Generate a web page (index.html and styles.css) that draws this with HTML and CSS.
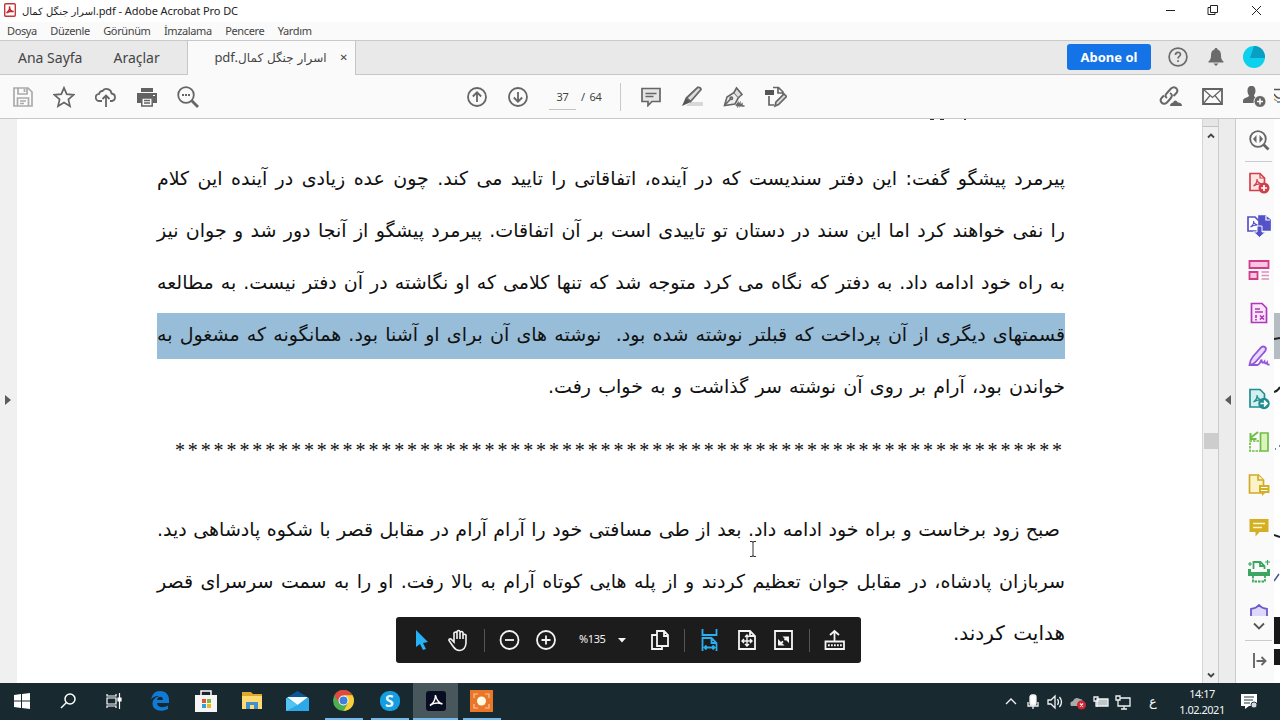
FILE: index.html
```html
<!DOCTYPE html>
<html lang="tr">
<head>
  <meta charset="UTF-8">
  <meta name="viewport" content="width=device-width, initial-scale=1.0">
  <title>اسرار جنگل کمال.pdf - Adobe Acrobat Pro DC</title>
  <link rel="stylesheet" href="styles.css">
</head>
<body>
  <div class="app">
    <header class="titlebar">
      <svg class="app-icon" width="12" height="14" viewBox="0 0 12 14"><rect x=".7" y=".7" width="10.6" height="12.6" rx="1" fill="#fff" stroke="#c4383b" stroke-width="1.4"/><path d="M2.5 10C5 8 6 5.500 5.500 3.500C5.500 6 7 8.500 9.700 8.500C7 8 4.500 8.500 2.500 10Z" fill="none" stroke="#c4262b" stroke-width="1.500"/></svg>
      <div class="window-title" dir="ltr"><span class="fa" dir="rtl">اسرار جنگل کمال</span>.pdf - Adobe Acrobat Pro DC</div>
      <div class="window-buttons">
        <svg width="100" height="14" viewBox="0 0 100 14" fill="none" stroke="#222"><path d="M1 7.500H10M46 4.500h-3v7h7v-2M45.500 2.500h7v7h-7zM87 3l9 9M96 3l-9 9"/></svg>
      </div>
    </header>

    <nav class="menubar">
      <span>Dosya</span><span>Düzenle</span><span>Görünüm</span><span>İmzalama</span><span>Pencere</span><span>Yardım</span>
    </nav>

    <div class="tabbar">
      <div class="home-tabs"><span>Ana Sayfa</span><span>Araçlar</span></div>
      <div class="tab"><span class="tab-name" dir="ltr">pdf.<span class="fa" dir="rtl">اسرار جنگل کمال</span></span><span class="tab-close">✕</span></div>
      <div class="account">
        <button class="subscribe">Abone ol</button>
        <svg width="20" height="20" viewBox="0 0 20 20" fill="none" stroke="#6b6b6b" stroke-width="1.700"><circle cx="10" cy="10" r="8.900"/><path d="M7.500 8c0-3.500 5-3.500 5-.5c0 2-2.500 1.700-2.500 4M10 13.200v1.800"/></svg>
        <svg width="16" height="20" viewBox="0 0 16 20" fill="#6b6b6b"><path d="M8 1c1 0 1.500.7 1.500 1.600C12 3.500 13 5.500 13 8c0 4 1 5 2.500 6.500v1H.5v-1C2 13 3 12 3 8c0-2.500 1-4.500 3.500-5.400C6.500 1.700 7 1 8 1zM5.500 16.500h5L8 19z"/></svg>
        <svg width="22" height="22" viewBox="0 0 22 22"><circle cx="11" cy="11" r="11" fill="#0bd0ee"/><path d="M11 0v0a11 11 0 0 1 11 12L7 12z" fill="#0a9fc2"/></svg>
      </div>
    </div>

    <div class="toolbar">
      <div class="tools tools-left">
        <svg width="20" height="20" viewBox="0 0 20 20" fill="none" stroke="#aaa" stroke-width="1.700"><path d="M1 1h14l4 4v14H1zM5 1v6h9V1M4.500 19v-8h11v8M7 14h6M7 16.500h4M11.500 2v3"/></svg>
        <svg width="22" height="22" viewBox="0 0 22 22" fill="none" stroke="#666" stroke-width="1.700"><path d="M11 1.800l2.700 6.400 7 .6-5.300 4.600 1.600 6.800-6-3.600-6 3.600 1.600-6.800L1.300 8.800l7-.6z"/></svg>
        <svg width="22" height="20" viewBox="0 0 22 20" fill="none" stroke="#666" stroke-width="1.800"><path d="M7 14H4.500a3.600 3.600 0 0 1-.3-7.200A3 3 0 0 1 7.500 4a5 5 0 0 1 9 2.500 3.800 3.800 0 0 1 .5 7.500h-2M11 20V8.500M7.500 12L11 8.500 14.500 12"/></svg>
        <svg width="20" height="20" viewBox="0 0 20 20"><path d="M4 1h12v4H4zM0 6h20v10h-4v-5H4v5H0z" fill="#626262"/><path d="M4.800 11h10.400v8H4.800zM7 13.500h6M7 16h6" fill="#fff" stroke="#626262" stroke-width="1.500"/><path d="M16 8.500h2" stroke="#fff"/></svg>
        <svg width="22" height="22" viewBox="0 0 22 22" fill="none" stroke="#666" stroke-width="1.800"><circle cx="9" cy="9" r="7.800"/><path d="M14.500 14.500l6.500 6.500" stroke-width="2.800"/><path d="M5 9h8" stroke-width="2" stroke-dasharray="2 1"/></svg>
      </div>
      <div class="tools tools-page">
        <svg width="20" height="20" viewBox="0 0 20 20" fill="none" stroke="#666" stroke-width="1.800"><circle cx="10" cy="10" r="9"/><path d="M10 15V5.500M5.800 9.500L10 5.300l4.200 4.200"/></svg>
        <svg width="20" height="20" viewBox="0 0 20 20" fill="none" stroke="#666" stroke-width="1.800"><circle cx="10" cy="10" r="9"/><path d="M10 5v9.500M5.800 10.500L10 14.700l4.200-4.200"/></svg>
        <span class="page-number">37</span><span class="page-total">/&nbsp; 64</span>
      </div>
      <div class="tools tools-comment">
        <svg width="20" height="20" viewBox="0 0 20 20" fill="#e4e4e4" stroke="#666" stroke-width="1.700"><path d="M1 1.500h18v13h-8L7 18.500v-4H1z"/><path d="M4.500 6.500h11M4.500 9.500h8" stroke-width="1.300"/></svg>
        <svg width="22" height="21" viewBox="0 0 22 21"><path d="M9 16h13v4H5z" fill="#d8d8d8"/><path d="M5.500 12L16.500 1.500q3-.5 3.500 2L9.500 15.500z" fill="#ddd" stroke="#666" stroke-width="1.800"/><path d="M4.500 12l5 4-3 1.500L1 20z" fill="#555"/></svg>
        <svg width="22" height="22" viewBox="0 0 22 22" fill="#eee" stroke="#666" stroke-width="1.600"><path d="M1.500 19.500L4 11l7-4.500 4.500 5L12 18z"/><path d="M1.500 19.500l6-6.500" fill="none"/><path d="M11 6.500L13.500 2l5.500 6.500-3.500 3" fill="#ddd"/><circle cx="8.300" cy="12.300" r="1.200"/><path d="M13 20l2-3v3l2-3v3l2-2v2h2.500" fill="none" stroke-width="1.400"/></svg>
        <svg width="22" height="22" viewBox="0 0 22 22" fill="none" stroke="#666" stroke-width="1.700"><path d="M8 1.500h5.500L18 6v3M13 2v5h5M4 10v9h5"/><path d="M0 4h9v5H0z" fill="#555" stroke="none"/><path d="M10 20l1-4 8-8 2.500 2.500-8 8z" fill="#ddd"/></svg>
      </div>
      <div class="tools tools-share">
        <svg width="23" height="21" viewBox="0 0 23 21" fill="none" stroke="#666" stroke-width="2"><path d="M8 12q-3-2 0-5l4-4.500q3-2.500 5.500 0 2 2.500-.5 5L14.500 10M11 7q3.500 2 .5 5.500L8 16.500Q5 19 2.500 16.500q-2-2.500.5-5l2-2"/><path d="M11 20q0-3 3-3.500 2-4 5 0 4 0 4 3.500z" fill="#666" stroke="none"/></svg>
        <svg width="21" height="17" viewBox="0 0 21 17" fill="none" stroke="#626262"><path d="M1 1h19v15H1z" stroke-width="1.800"/><path d="M1.500 1.500l9 8 9-8M1.500 15.500L8 7.500M19.500 15.500L13 7.500" stroke-width="1.200"/></svg>
        <svg width="23" height="21" viewBox="0 0 23 21"><path d="M8.500 0c3 0 4 2 4 5 0 2-1 3-1.500 4.500 0 2 4 1.500 5 4.500l-3 3H0v-2c0-4 6-3 6-5.500C5 8 4.500 7 4.500 5c0-3 1-5 4-5z" fill="#666"/><circle cx="17" cy="15.500" r="6" fill="#666" stroke="#fafafa"/><path d="M17 12.500v6M14 15.500h6" stroke="#fff" stroke-width="1.500"/></svg>
      </div>
      <svg class="edge-icon" width="6" height="18" viewBox="0 0 6 18" fill="none"><path d="M0 1.500h6M0 6q3 5 6 4" stroke="#555" stroke-width="1.500"/><path d="M0 11l3 2" stroke="#e19436" stroke-width="1.500"/><path d="M3 14h3" stroke="#397cc3" stroke-width="1.500"/></svg>
    </div>

    <main class="workspace">
      <div class="left-rail"><svg width="6" height="10" viewBox="0 0 6 10"><path d="M0 0l6 5-6 5z" fill="#5c5c5c"/></svg></div>
      <div class="document">
        <div class="cut-line"><i></i><i></i><i></i></div>
        <div class="page" dir="rtl" lang="fa">
          <p class="line">پیرمرد پیشگو گفت: این دفتر سندیست که در آینده، اتفاقاتی را تایید می کند. چون عده زیادی در آینده این کلام</p>
          <p class="line">را نفی خواهند کرد اما این سند در دستان تو تاییدی است بر آن اتفاقات. پیرمرد پیشگو از آنجا دور شد و جوان نیز</p>
          <p class="line">به راه خود ادامه داد. به دفتر که نگاه می کرد متوجه شد که تنها کلامی که او نگاشته در آن دفتر نیست. به مطالعه</p>
          <p class="line selected">قسمتهای دیگری از آن پرداخت که قبلتر نوشته شده بود.&nbsp; نوشته های آن برای او آشنا بود. همانگونه که مشغول به</p>
          <p class="line w5">خواندن بود، آرام بر روی آن نوشته سر گذاشت و به خواب رفت.</p>
          <p class="stars">*********************************************************************</p>
          <p class="line indent">صبح زود برخاست و براه خود ادامه داد. بعد از طی مسافتی خود را آرام آرام در مقابل قصر با شکوه پادشاهی دید.</p>
          <p class="line">سربازان پادشاه، در مقابل جوان تعظیم کردند و از پله هایی کوتاه آرام به بالا رفت. او را به سمت سرسرای قصر</p>
          <p class="line last">هدایت کردند.</p>
        </div>
        <svg class="text-cursor" width="8" height="16" viewBox="0 0 8 16" fill="none" stroke="#333"><path d="M1 .5h2.500l.5 1 .5-1H7M4 1v14M1 15.500h2.500l.5-1 .5 1H7"/></svg>

        <div class="page-controls">
          <svg width="464" height="46" viewBox="0 0 464 46" fill="none" stroke="#f4f4f4" stroke-width="1.800">
            <path d="M20 13v17l4-3 3 6 3-1-3-6 5-1z" fill="#26b2f5" stroke="none"/>
            <path d="M57.500 30L53 23.500q-.5-2 2-1.500l3 3V16q1.500-2 3 0v6V14.500q1.500-2 3 0V22v-6.500q1.500-2 3 0V22v-4q1.500-1.500 3 0v8q-.5 7-6.500 7.500-3.500 0-6-3.500z" stroke-width="1.600"/>
            <path d="M88.500 12v23M288.500 12v23M413.500 12v23" stroke="#555" stroke-width="1"/>
            <circle cx="113.500" cy="23" r="9"/><path d="M109 23h9"/>
            <circle cx="150" cy="23" r="9"/><path d="M145.500 23h9M150 18.500v9"/>
            <path d="M222 21h8l-4 4.500z" fill="#f4f4f4" stroke="none"/>
            <path d="M261 14h7l4 4v11h-11zM268 14v5h4M261 18h-5v14h10v-3"/>
            <path d="M306.500 12v6h14v-6M306.500 34V21h9l5 5v8M315.500 21v5h5M308.500 30.500h10M310.500 28.500l-2 2 2 2M316.500 28.500l2 2-2 2" stroke="#2cafef"/>
            <path d="M343 14h11l5 5v13h-16zM354 14v5h5"/><path d="M351 18v11M346 24h10M349 20l2-2 2 2M349 27l2 2 2-2M348 22l-2 2 2 2M354 22l2 2-2 2" stroke-width="1.400"/>
            <path d="M379 14h17v18h-17z"/><path d="M386.500 19.500H393V26zM382 22v6.500h6.500z" fill="#f4f4f4" stroke="none"/><path d="M384 27l7-6" stroke-dasharray="4 2"/>
            <path d="M438.500 24V14M434 18l4.500-4 4.500 4M429.500 24.500H448V32h-18.500z"/><path d="M432 28.300h14" stroke-width="2" stroke-dasharray="1.800 1.200"/>
          </svg>
          <span class="zoom-value">%135</span>
        </div>
      </div>

      <div class="scrollbar">
        <svg width="8" height="6" viewBox="0 0 8 6" fill="none" stroke="#444" stroke-width="1.800"><path d="M1 4.500l3-3 3 3"/></svg>
        <div class="thumb"></div>
        <svg width="8" height="6" viewBox="0 0 8 6" fill="none" stroke="#444" stroke-width="1.800"><path d="M1 1.500l3 3 3-3"/></svg>
      </div>
      <div class="right-rail"><svg width="6" height="10" viewBox="0 0 6 10"><path d="M6 0L0 5l6 5z" fill="#5c5c5c"/></svg></div>

      <aside class="tool-pane">
        <svg width="22" height="22" viewBox="0 0 22 22" fill="none" stroke="#666" stroke-width="1.800"><circle cx="10" cy="10" r="7.800"/><path d="M15.500 15.500l5 5" stroke-width="2.800"/><path d="M8.500 6v8L5 10zM11.500 6v8l3.500-4z" fill="#666" stroke="none"/></svg>
        <hr>
        <svg width="22" height="22" viewBox="0 0 22 22" fill="#fce6e5" stroke="#d0404c" stroke-width="1.700"><path d="M2 1.500h10l4.500 4.500v12.500H2z"/><path d="M12 1.500V6h4.500M5.500 14q4-3 3.500-7 0 4 5 5-5-.5-8.500 2z" fill="none" stroke-width="1.200"/><circle cx="16" cy="16" r="5.500" fill="#d0404c" stroke="none"/><path d="M16 13v6M13 16h6" stroke="#fff"/></svg>
        <svg width="24" height="23" viewBox="0 0 24 23" fill="none" stroke="#5352c8" stroke-width="1.700"><path d="M12 1h6l5 4v10H12z" fill="#5352c8"/><path d="M1 2h7l4 4v10H1z" fill="#fff"/><path d="M3.500 12q4-3 3-6 0 3 4 4-4 0-7 2z" stroke-width="1.200"/><path d="M10 11h5v6h3.500l-6 5.500-6-5.500H10z" fill="#5352c8" stroke="#fafafa" stroke-width="1"/><path d="M19 1v4h4" stroke="#fff" stroke-width="1.200"/></svg>
        <svg width="22" height="22" viewBox="0 0 22 22" fill="#fac6df" stroke="#cf3c89" stroke-width="1.800"><path d="M1.500 2h19v7h-19zM1.500 13h8v7h-8z"/><path d="M13.500 13h7.500M13.500 16.500h7.500M13.500 20h7.500" stroke="#dd8fb8" stroke-width="1.400"/></svg>
        <svg width="22" height="22" viewBox="0 0 22 22" fill="#fae5fb" stroke="#ae37b9" stroke-width="1.700"><path d="M3.500 1.500H14l4.500 4.500v14.500h-15z"/><path d="M7 7h5M7 10h8" stroke-width="1.400"/><path d="M8 13v3M8 17v1.500M12 13.500l4 4M16 13.500l-4 4"/></svg>
        <svg width="22" height="22" viewBox="0 0 22 22" fill="#e6d9fc" stroke="#9252da" stroke-width="1.800"><path d="M1.500 20Q2 15 5 11.500L13.500 2q3-1.500 4.500 1.500 0 2-2 4L7.500 17q-2 2.500-6 3z"/><path d="M1.500 20h8q2.500-1 4-5.500.5 5.500 3 2 .5 3.500 2.500 1 0 2.500 2.500 2" fill="none"/></svg>
        <svg width="22" height="22" viewBox="0 0 22 22" fill="#d4efef" stroke="#208e90" stroke-width="1.700"><path d="M2 1.500h10l4.500 4.500v13H2z"/><path d="M5.500 14q4-3 3.500-7 0 4 5 5-5-.5-8.500 2z" fill="none" stroke-width="1.200"/><circle cx="16" cy="15.500" r="5.700" fill="#208e90" stroke="none"/><path d="M12.500 15.500h6M16 12.500l3 3-3 3" stroke="#fff"/></svg>
        <svg width="22" height="22" viewBox="0 0 22 22" fill="none" stroke="#70bd45" stroke-width="1.700"><path d="M12.500 2h7.500v18h-7.500z" fill="#d9f4bd"/><path d="M11 10H2v10h10" stroke-dasharray="2.500 1"/><path d="M10 1L3 6.500M2.500 2v6h6" stroke-width="2"/></svg>
        <svg width="22" height="22" viewBox="0 0 22 22" fill="#faf3c8" stroke="#d1aa27" stroke-width="1.700"><path d="M1.500 1h9l5 5v13h-14z"/><path d="M10 1v5h5.500"/><path d="M11 11h10.500v8H17l-3 3v-3h-3z" fill="#d4ae24" stroke="none"/><path d="M13 13.500h6.500M13 16.500h6.500" stroke="#fff" stroke-width="1.200"/></svg>
        <svg width="22" height="22" viewBox="0 0 22 22"><path d="M1.500 2h19v13h-9L7.500 19.500V15h-6z" fill="#d4ae24"/><path d="M5 6.500h12M5 10.500h9" stroke="#fff8c4" stroke-width="1.700"/></svg>
        <svg width="22" height="23" viewBox="0 0 22 23" fill="none" stroke="#3ba65f" stroke-width="1.800"><path d="M5.500 9V2h7l4 4v3M12 2v4h4.500"/><path d="M0 9h3v3h16V9h3v7H0z" fill="#3ba65f" stroke="none"/><path d="M5 16v5.500h12V16" stroke-dasharray="2.500 1"/><path d="M0 4h4M2 2v4M17 2h5M19.500 0v5" stroke-width="1.200"/></svg>
        <svg class="shield" width="22" height="12" viewBox="0 0 22 12"><path d="M3 12V5q5-.5 8-4 3 3.500 8 4v7" fill="#ded9fb" stroke="#675cc9" stroke-width="1.800"/></svg>
        <svg class="more" width="12" height="8" viewBox="0 0 12 8" fill="none" stroke="#555" stroke-width="1.800"><path d="M1 1.500l5 5 5-5"/></svg>
        <hr>
        <svg class="collapse" width="16" height="16" viewBox="0 0 16 16" fill="none" stroke="#666" stroke-width="1.900"><path d="M3 0v15M5.500 8H14M10.500 4L14.500 8l-4 4"/></svg>
      </aside>
      <div class="screen-edge">
        <svg width="6" height="563" viewBox="0 0 6 563"><path d="M0 194h6v46H0z" fill="#b5bdc2"/><path d="M0 220l6-1M0 273q4-1 6-5M0 416l6 2" stroke="#222" stroke-width="2" fill="none"/><path d="M0 498h6v27H0zM0 530h6v16H0z" fill="#181818"/><path d="M0 462l5-7M1 330h1M5 327h1" stroke="#46538f" stroke-width="1.500"/></svg>
      </div>
    </main>

    <footer class="taskbar">
      <div class="task"><svg width="16" height="16" viewBox="0 0 16 16" fill="#fff"><path d="M0 2l7-1v6.500H0zM8 1l8-1v7.500H8zM0 8.500h7V15l-7-1zM8 8.500h8V16l-8-1z"/></svg></div>
      <div class="task"><svg width="16" height="16" viewBox="0 0 16 16" fill="none" stroke="#fff" stroke-width="1.500"><circle cx="10" cy="6" r="5"/><path d="M6.500 9.500L1 15"/></svg></div>
      <div class="task"><svg width="16" height="16" viewBox="0 0 16 16" fill="none" stroke="#fff" stroke-width="1.200"><path d="M1 1v2h9V1M1 5h9v6H1zM1 15v-2h9v2M13.500 0v16"/><path d="M12 5h3v3h-3z" fill="#fff"/></svg></div>
      <div class="task"><svg width="20" height="20" viewBox="0 0 20 20"><path d="M1 9C2 3 5 0 10 0c6 0 9 4 9 9v3H7c.5 5 7 5 11 2.500V18C10 22 2 19 2.500 12 3 8 6 6 9 5 4 5 2 7 1 9zm6 0h6c0-4-5-4.500-6 0z" fill="#107bd4"/></svg></div>
      <div class="task"><svg width="22" height="22" viewBox="0 0 22 22"><path d="M6 7V1h10v6" fill="none" stroke="#fff" stroke-width="1.500"/><path d="M0 5h22v17H0z" fill="#f5f5f5"/><path d="M7 9h4v4H7z" fill="#df572e"/><path d="M12 9h4v4h-4z" fill="#82b933"/><path d="M7 14h4v4H7z" fill="#2ba4dd"/><path d="M12 14h4v4h-4z" fill="#f2b526"/></svg></div>
      <div class="task"><svg width="20" height="18" viewBox="0 0 20 18"><path d="M0 0h9l2 2h9v15H0z" fill="#dda82d"/><path d="M0 4h20v13H0z" fill="#ffda73"/><path d="M4 17v-7h12v7h-4v-4H8v4z" fill="#3f91cf"/></svg></div>
      <div class="task"><svg width="23" height="20" viewBox="0 0 23 20"><path d="M0 7l11.500-7L23 7z" fill="#0b5798"/><path d="M0 7h23v13H0z" fill="#2da8e8"/><path d="M1 6h21l-10.500 8z" fill="#f5fbff"/><path d="M0 7l11.500 7L0 20z" fill="#54c5f1"/></svg></div>
      <div class="task running"><svg width="21" height="21" viewBox="0 0 21 21"><circle cx="10.500" cy="10.500" r="10.500" fill="#4caf50"/><path d="M1.400 5.300A10.500 10.500 0 0 1 19.600 5.300H10.500L6 13z" fill="#e2483d"/><path d="M19.600 5.300A10.500 10.500 0 0 1 10.500 21L15 13l-4-7.700z" fill="#f9ce36"/><circle cx="10.500" cy="10.500" r="5" fill="#fff"/><circle cx="10.500" cy="10.500" r="4" fill="#427fd9"/></svg></div>
      <div class="task running"><span class="skype">S</span></div>
      <div class="task running active"><svg width="20" height="20" viewBox="0 0 20 20"><rect width="20" height="20" rx="3" fill="#080d22"/><path d="M4 14.500Q9.500 11 9.500 4q1 7 7 9Q9 10.500 4 14.500z" fill="none" stroke="#fff" stroke-width="1.500"/></svg></div>
      <div class="task running"><svg width="23" height="22" viewBox="0 0 23 22"><path d="M0 0h23v22H0z" fill="#e97629"/><path d="M4 8V4h4M15 4h4v4M19 14v4h-4M8 18H4v-4" fill="none" stroke="#ffc399" stroke-width="1.200"/><circle cx="11.500" cy="11" r="4.500" fill="#fffbe5"/></svg></div>

      <div class="tray">
        <svg width="128" height="18" viewBox="0 0 128 18" fill="none" stroke="#f0f3f4" stroke-width="1.300">
          <path d="M1 11l5-5 5 5"/><rect x="25" y="2" width="6" height="10" rx="2" fill="#fff"/><path d="M23 9v4h10V9M28 13v3"/>
          <path d="M43 7h3l4-4v12l-4-4h-3zM52.500 6q2 3 0 6M54.500 4q4 5 0 10"/>
          <path d="M66 13q-2-4 2-5 2-5 7-2 3 0 3 4v3z" fill="#aaa" stroke="none"/><circle cx="76.500" cy="12" r="4.500" fill="#cf2634" stroke="none"/><path d="M75 10.500l3 3M78 10.500l-3 3"/>
          <path d="M92 6h11v7H92z" fill="#bdc6c9"/><path d="M89 4h4v4h-4zM91 8v5h2"/>
          <path d="M113 5h12v8h-12zM116 16h6M119 13v3"/><path d="M111 3h4v4h-4z" fill="#172a30"/>
        </svg>
        <span class="lang">ع</span>
        <div class="clock"><span>14:17</span><span>1.02.2021</span></div>
        <svg width="17" height="17" viewBox="0 0 17 17"><path d="M0 1h16v12H8l-4 3v-3H0z" fill="#fff"/><path d="M3 4h10M3 7h9M3 10h6" stroke="#263a40" stroke-width="1.200"/><circle cx="13" cy="12" r="3" fill="#d5dadd" stroke="#263a40"/></svg>
      </div>
    </footer>
  </div>
</body>
</html>
```
FILE: styles.css
```css
* {
  box-sizing: border-box;
}

body {
  margin: 0;
  font-family: "Noto Sans", "DejaVu Sans", sans-serif;
  color: #444;
  background: #fff;
}

svg {
  display: block;
  flex-shrink: 0;
}

.app {
  width: 1280px;
  height: 720px;
  display: flex;
  flex-direction: column;
  overflow: hidden;
}

.titlebar {
  height: 22px;
  display: flex;
  align-items: center;
  padding: 0 15px 2px 4px;
  background: #fff;
}

.window-title {
  margin-left: 6px;
  width: 216px;
  font-size: 11px;
  letter-spacing: -0.08px;
  color: #222;
  white-space: nowrap;
}

.window-title .fa {
  font-size: 10px;
}

.fa {
  font-family: "DejaVu Sans", sans-serif;
  display: inline-block;
  letter-spacing: 0;
}

.window-buttons {
  margin-left: auto;
}

.menubar {
  height: 18px;
  display: flex;
  gap: 13.5px;
  padding-left: 7px;
  background: #fafafa;
  font-size: 11px;
  line-height: 17px;
  letter-spacing: -0.38px;
}

.tabbar {
  height: 35px;
  display: flex;
  background: #e9e9e9;
  border-top: 1px solid #c9c9c9;
  border-bottom: 1px solid #c6c6c6;
}

.home-tabs {
  width: 187px;
  padding: 0 0 0 18px;
  display: flex;
  gap: 31px;
  font-size: 14px;
  line-height: 33px;
}

.tab {
  width: 169px;
  height: 35px;
  background: #fafafa;
  border-left: 1px solid #c6c6c6;
  border-right: 1px solid #c6c6c6;
  display: flex;
  align-items: center;
  justify-content: flex-end;
  gap: 13px;
  padding: 0 7px 3px 0;
  font-size: 13px;
  white-space: nowrap;
}

.tab .fa {
  font-size: 12px;
}

.tab-close {
  font-family: "DejaVu Sans", sans-serif;
  font-size: 10px;
  font-weight: bold;
}

.account {
  margin-left: auto;
  display: flex;
  align-items: center;
  padding: 0 15px 2px 0;
  gap: 19px;
}

.subscribe {
  width: 84px;
  height: 26px;
  margin-right: -2px;
  padding: 0;
  border: 0;
  border-radius: 3px;
  background: #1473e6;
  color: #fff;
  font: bold 13px "Noto Sans", sans-serif;
}

.account svg:nth-child(2) {
  margin-right: 1px;
}

.toolbar {
  height: 44px;
  display: flex;
  align-items: center;
  background: #fafafa;
  border-bottom: 1px solid #c7c7c7;
}

.tools {
  display: flex;
  align-items: center;
  height: 28px;
}

.tools-left {
  width: 467px;
  padding-left: 13px;
  gap: 20px;
}

.tools-page {
  width: 154px;
  gap: 21px;
  border-right: 1px solid #c9c9c9;
  font-size: 11px;
  letter-spacing: -0.4px;
}

.page-number {
  width: 27px;
  height: 26px;
  margin-right: -16px;
  line-height: 25px;
  text-align: center;
  border-bottom: 1px solid #c2c2c2;
}

.page-total {
  white-space: nowrap;
}

.tools-comment {
  margin-left: 20px;
  gap: 20px;
}

.tools-share {
  margin-left: auto;
  gap: 20px;
}

.edge-icon {
  margin-left: 8px;
}

.workspace {
  flex: 1;
  display: flex;
  min-height: 0;
}

.left-rail {
  width: 17px;
  background: #f0f0f0;
  padding: 276px 0 0 5px;
}

.document {
  position: relative;
  flex: 1;
  background: #fff;
  overflow: hidden;
}

.cut-line {
  height: 3px;
  display: flex;
  padding-left: 913px;
  gap: 6px;
}

.cut-line i {
  width: 4px;
  height: 1px;
  background: #333;
}

.cut-line i:last-child {
  margin-left: 14px;
  width: 2px;
}

.page {
  width: 908px;
  margin-left: 140px;
  padding-top: 35px;
  font-family: "DejaVu Sans", sans-serif;
  font-size: 19px;
  color: #111;
}

.line {
  margin: 0;
  height: 52px;
  line-height: 42px;
  text-align: justify;
  text-align-last: justify;
  white-space: nowrap;
}

.line.selected {
  height: 46px;
  margin-bottom: 6px;
  background: #98bdd8;
}

.line.indent {
  padding-right: 5px;
}

.line.w5 {
  width: 517px;
}

.line.last {
  text-align-last: start;
  font-size: 20px;
  word-spacing: 2px;
}

.stars {
  height: 91px;
  margin: 0;
  padding: 18px 0 0;
  font: 20px/30px "Liberation Serif", serif;
  letter-spacing: 2.9px;
  white-space: nowrap;
}

.text-cursor {
  position: absolute;
  left: 732px;
  top: 422px;
}

.page-controls {
  position: absolute;
  left: 379px;
  top: 498px;
  width: 465px;
  height: 46px;
  border-radius: 3px;
  background: #1c1c1c;
}

.zoom-value {
  position: absolute;
  left: 183px;
  top: 14px;
  color: #f4f4f4;
  font-size: 11px;
  letter-spacing: -0.4px;
}

.scrollbar {
  width: 17px;
  border-left: 1px solid #d5d5d5;
  border-right: 1px solid #cbcbcb;
  background: #f0f0f0;
  display: flex;
  flex-direction: column;
  align-items: center;
  padding: 0 0 5px;
}

.scrollbar::before {
  content: "";
  width: 100%;
  height: 7px;
  margin-bottom: 6px;
  background: #e6e6e6;
  border-bottom: 1px solid #c2c2c2;
}

.thumb {
  width: 14px;
  height: 16px;
  margin: 294px 0 auto;
  background: #cdcdcd;
}

.right-rail {
  width: 17px;
  padding: 276px 0 0 6px;
  border-right: 1px solid #cbcbcb;
  background: #ececec;
}

.tool-pane {
  width: 38px;
  padding: 10px 0 0 7px;
  display: flex;
  flex-direction: column;
  align-items: center;
  gap: 21px;
  background: #fafafa;
}

.tool-pane hr {
  width: 27px;
  height: 1px;
  margin: -11px 0;
  border: 0;
  background: #ccc;
  flex-shrink: 0;
}

.tool-pane .more {
  margin-top: -15px;
}

.tool-pane .collapse {
  margin-top: 2px;
}

.screen-edge {
  width: 6px;
  background: #fff;
}

.taskbar {
  height: 37px;
  display: flex;
  background: #18292f;
  color: #f2f5f5;
}

.task {
  width: 45px;
  margin-right: 1px;
  padding-bottom: 2px;
  display: flex;
  align-items: center;
  justify-content: center;
}

.task:first-child {
  width: 44px;
}

.task.running {
  background: linear-gradient(#76b9ed, #76b9ed) center bottom / 38px 2px no-repeat;
}

.task.active {
  background-color: #48575c;
  background-size: 45px 2px;
}

.skype {
  width: 20px;
  height: 20px;
  border-radius: 9px;
  background: #149de0;
  font: bold 16px/20px "Open Sans", sans-serif;
  text-align: center;
}

.tray {
  margin-left: auto;
  padding-right: 22px;
  display: flex;
  align-items: center;
}

.lang {
  width: 46px;
  padding-right: 6px;
  text-align: center;
  font: 13px "DejaVu Sans", sans-serif;
}

.clock {
  width: 46px;
  margin-right: 16px;
  display: flex;
  flex-direction: column;
  align-items: center;
  font-size: 11px;
  line-height: 16px;
  letter-spacing: -0.5px;
  white-space: nowrap;
}
```
